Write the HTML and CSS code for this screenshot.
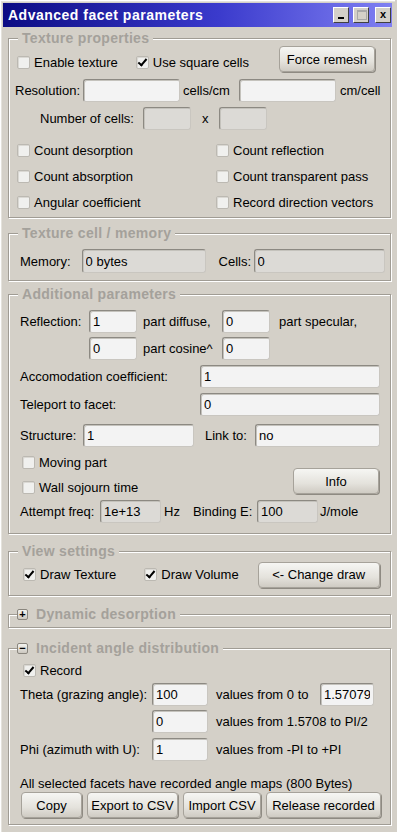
FILE: index.html
```html
<!DOCTYPE html>
<html lang="en">
<head>
    <meta charset="UTF-8">
    <title>Advanced facet parameters</title>
    <link rel="stylesheet" href="styles.css">
</head>
<body>
<div class="window">

    <div class="titlebar">
        <span class="title">Advanced facet parameters</span>
        <div class="title-btns">
            <span class="tbtn tb-min"></span>
            <span class="tbtn tb-max"></span>
            <span class="tbtn tb-close">x</span>
        </div>
    </div>

    <!-- Texture properties -->
    <fieldset class="group g-texture">
        <legend>Texture properties</legend>
        <div class="row r-top">
            <label class="check c-enable"><span class="cb"></span>Enable texture</label>
            <label class="check c-square"><span class="cb on"></span>Use square cells</label>
            <button class="btn b-remesh">Force remesh</button>
        </div>
        <div class="row r-res">
            <span class="lbl l-res">Resolution:</span>
            <input class="field f-res" value="">
            <span class="lbl l-cpc">cells/cm</span>
            <input class="field f-res2" value="">
            <span class="lbl">cm/cell</span>
        </div>
        <div class="row r-cells">
            <span class="lbl l-ncells">Number of cells:</span>
            <input class="field off f-cells" value="">
            <span class="lbl l-x">x</span>
            <input class="field off f-cells" value="">
        </div>
        <div class="row r-count first">
            <label class="check c-left"><span class="cb"></span>Count desorption</label>
            <label class="check c-right"><span class="cb"></span>Count reflection</label>
        </div>
        <div class="row r-count">
            <label class="check c-left"><span class="cb"></span>Count absorption</label>
            <label class="check c-right"><span class="cb"></span>Count transparent pass</label>
        </div>
        <div class="row r-count">
            <label class="check c-left"><span class="cb"></span>Angular coefficient</label>
            <label class="check c-right"><span class="cb"></span>Record direction vectors</label>
        </div>
    </fieldset>

    <!-- Texture cell / memory -->
    <fieldset class="group g-memory">
        <legend>Texture cell / memory</legend>
        <div class="row r-mem">
            <span class="lbl l-mem">Memory:</span>
            <input class="field off f-mem" value="0 bytes">
            <span class="lbl l-cellsc">Cells:</span>
            <input class="field off f-cellsc" value="0">
        </div>
    </fieldset>

    <!-- Additional parameters -->
    <fieldset class="group g-add">
        <legend>Additional parameters</legend>
        <div class="row r-refl">
            <span class="lbl l-refl">Reflection:</span>
            <input class="field f-small" value="1">
            <span class="lbl l-part">part diffuse,</span>
            <input class="field f-small" value="0">
            <span class="lbl l-spec">part specular,</span>
        </div>
        <div class="row r-refl2">
            <input class="field f-small f-indent" value="0">
            <span class="lbl l-part">part cosine^</span>
            <input class="field f-small" value="0">
        </div>
        <div class="row r-wide">
            <span class="lbl l-long">Accomodation coefficient:</span>
            <input class="field f-long" value="1">
        </div>
        <div class="row r-wide">
            <span class="lbl l-long">Teleport to facet:</span>
            <input class="field f-long" value="0">
        </div>
        <div class="row r-struct">
            <span class="lbl l-struct">Structure:</span>
            <input class="field f-struct" value="1">
            <span class="lbl l-link">Link to:</span>
            <input class="field f-link" value="no">
        </div>
        <div class="row r-moving">
            <div class="col">
                <label class="check c-move"><span class="cb"></span>Moving part</label>
                <label class="check c-move"><span class="cb"></span>Wall sojourn time</label>
            </div>
            <button class="btn b-info">Info</button>
        </div>
        <div class="row r-freq">
            <span class="lbl l-freq">Attempt freq:</span>
            <input class="field off f-freq" value="1e+13">
            <span class="lbl l-hz">Hz</span>
            <span class="lbl l-bind">Binding E:</span>
            <input class="field off f-freq" value="100">
            <span class="lbl l-jm">J/mole</span>
        </div>
    </fieldset>

    <!-- View settings -->
    <fieldset class="group g-view">
        <legend>View settings</legend>
        <div class="row r-view">
            <label class="check c-tex"><span class="cb on"></span>Draw Texture</label>
            <label class="check c-vol"><span class="cb on"></span>Draw Volume</label>
            <button class="btn b-draw">&lt;- Change draw</button>
        </div>
    </fieldset>

    <!-- Dynamic desorption (collapsed) -->
    <fieldset class="group g-dyn">
        <legend class="toggle"><span class="tg">+</span>Dynamic desorption</legend>
    </fieldset>

    <!-- Incident angle distribution -->
    <fieldset class="group g-angle">
        <legend class="toggle"><span class="tg">−</span>Incident angle distribution</legend>
        <div class="row r-record">
            <label class="check c-tex"><span class="cb on"></span>Record</label>
        </div>
        <div class="row r-theta">
            <span class="lbl l-theta">Theta (grazing angle):</span>
            <input class="field f-angle" value="100">
            <span class="lbl l-vals">values from 0 to</span>
            <input class="field f-limit" value="1.570796">
        </div>
        <div class="row r-theta2">
            <input class="field f-angle f-angle-indent" value="0">
            <span class="lbl l-vals">values from 1.5708 to PI/2</span>
        </div>
        <div class="row r-phi">
            <span class="lbl l-theta">Phi (azimuth with U):</span>
            <input class="field f-angle" value="1">
            <span class="lbl l-vals">values from -PI to +PI</span>
        </div>
        <div class="row r-info">
            <span class="lbl">All selected facets have recorded angle maps (800 Bytes)</span>
        </div>
        <div class="row r-btns">
            <button class="btn b-copy">Copy</button>
            <button class="btn b-export">Export to CSV</button>
            <button class="btn b-import">Import CSV</button>
            <button class="btn b-release">Release recorded</button>
        </div>
    </fieldset>

</div>
</body>
</html>
```

FILE: styles.css
```css
body {
    margin: 0;
    padding: 0;
    background-color: #d4d0c8;
    font-family: 'Liberation Sans', Arial, sans-serif;
    font-size: 13px;
    color: #000;
}
.window {
    width: 395px;
    height: 832px;
    box-sizing: border-box;
    padding: 3px 3px 0 0;
    background-color: #d4d0c8;
    box-shadow: inset 1px 1px 0 #fff, inset 2px 2px 0 #e4e2dc;
}

/* title bar */
.titlebar {
    height: 24px;
    margin-left: 3px;
    display: flex;
    align-items: center;
    justify-content: space-between;
    background: linear-gradient(to right, #0c0c84, #3a3acc 55%, #8080f2);
}
.title {
    color: #fff;
    font-weight: bold;
    font-size: 14px;
    padding-left: 5px;
    letter-spacing: 0.5px;
}
.title-btns {
    display: flex;
    gap: 4px;
    padding-right: 1px;
}
.tbtn {
    width: 16px;
    height: 16px;
    box-sizing: border-box;
    background-color: #d4d0c8;
    border: 1px solid;
    border-color: #fff #404040 #404040 #fff;
    font-size: 11px;
    line-height: 13px;
    text-align: center;
    position: relative;
}
.tb-min::after {
    content: "";
    position: absolute;
    left: 4px;
    bottom: 3px;
    width: 6px;
    height: 2px;
    background: #000;
}
.tb-max::after {
    content: "";
    position: absolute;
    left: 3px;
    top: 2px;
    width: 8px;
    height: 7px;
    border: 1px solid #a8a8a8;
    border-top-width: 2px;
}
.tb-close {
    margin-left: 2px;
    font-weight: bold;
}

/* group boxes */
.group {
    margin: 0 0 0 8px;
    padding: 0;
    width: 383px;
    box-sizing: border-box;
    border: 1px solid #a09c94;
    box-shadow: inset 1px 1px 0 #fff, 1px 1px 0 #fff;
    min-width: 0;
}
.group legend {
    margin-left: 9px;
    padding: 0 4px;
    height: 16px;
    line-height: 16px;
    font-size: 14px;
    letter-spacing: 0.3px;
    font-weight: bold;
    color: #a4a19b;
    background-color: #d4d0c8;
}
.group legend.toggle {
    margin-left: 8px;
    padding-left: 0;
    display: flex;
    align-items: center;
}
.tg {
    width: 11px;
    height: 11px;
    box-sizing: border-box;
    margin-right: 8px;
    border: 1px solid #8a867e;
    border-radius: 2px;
    background: linear-gradient(#f4f4f0, #ccc8c0);
    color: #000;
    font-size: 11px;
    line-height: 8px;
    letter-spacing: 0;
    text-align: center;
}
.g-texture { margin-top: 3px; padding-bottom: 2px; }
.g-memory { margin-top: 7px; padding-bottom: 7px; }
.g-add { margin-top: 5px; padding-bottom: 10px; }
.g-view { margin-top: 9px; padding-bottom: 8px; }
.g-dyn { margin-top: 10px; padding-bottom: 5px; }
.g-angle { margin-top: 12px; padding-bottom: 6px; }

/* rows */
.row {
    display: flex;
    align-items: center;
}
.lbl {
    white-space: nowrap;
}
.check {
    display: flex;
    align-items: center;
    height: 16px;
    white-space: nowrap;
}
.cb {
    width: 13px;
    height: 13px;
    box-sizing: border-box;
    margin-right: 4px;
    border: 1px solid #bcb9b2;
    border-radius: 2px;
    background: #f0f0ee;
    box-shadow: inset 1px 1px 0 #dad8d3;
    position: relative;
}
.cb.on::after {
    content: "";
    position: absolute;
    left: 3px;
    top: 0px;
    width: 3px;
    height: 7px;
    border: solid #000;
    border-width: 0 2px 2px 0;
    transform: rotate(40deg);
}
.field {
    height: 23px;
    box-sizing: border-box;
    padding: 0 3px;
    font-family: 'Liberation Sans', Arial, sans-serif;
    font-size: 13px;
    color: #000;
    border: 1px solid;
    border-color: #8c8982 #c9c6c0 #c9c6c0 #8c8982;
    border-radius: 3px;
    background-color: #f3f3f3;
    box-shadow: inset 1px 1px 0 #c4c2bc;
    outline: none;
}
.field.off {
    background-color: #dcdad6;
}
.btn {
    height: 26px;
    box-sizing: border-box;
    padding: 0;
    font-family: 'Liberation Sans', Arial, sans-serif;
    font-size: 13px;
    color: #000;
    border: 1px solid #a6a29a;
    border-radius: 4px;
    background: linear-gradient(#f6f6f3, #e4e2dc 60%, #cfcbc3);
    box-shadow: 1px 1px 0 #8e8a82;
}

/* texture properties */
.r-top { height: 26px; align-items: flex-end; }
.c-enable { margin-left: 8px; margin-bottom: 2px; }
.c-square { margin-left: 18px; margin-bottom: 2px; }
.b-remesh { margin-left: 30px; width: 96px; align-self: flex-start; }
.r-res { margin-top: 7px; height: 23px; padding-left: 6px; }
.l-res { width: 68px; }
.f-res { width: 97px; }
.l-cpc { margin-left: 3px; width: 56px; }
.f-res2 { width: 97px; margin-right: 4px; }
.r-cells { margin-top: 5px; height: 23px; padding-left: 31px; }
.l-ncells { width: 103px; }
.f-cells { width: 48px; }
.l-x { margin: 0 10px 0 11px; }
.r-count { height: 26px; }
.r-count.first { margin-top: 7px; }
.c-left { margin-left: 8px; width: 199px; }

/* memory */
.r-mem { margin-top: 8px; height: 24px; padding-left: 11px; }
.f-mem { width: 124px; height: 24px; margin-left: 11px; }
.l-cellsc { margin-left: 13px; width: 35px; }
.f-cellsc { width: 131px; height: 24px; }

/* additional parameters */
.r-refl { margin-top: 8px; height: 23px; padding-left: 11px; }
.l-refl { width: 69px; }
.f-small { width: 48px; }
.l-part { margin-left: 6px; width: 79px; }
.l-spec { margin-left: 9px; }
.r-refl2 { margin-top: 4px; height: 23px; }
.f-indent { margin-left: 80px; }
.r-wide { margin-top: 5px; height: 23px; padding-left: 11px; }
.l-long { width: 180px; }
.f-long { width: 180px; }
.r-struct { margin-top: 8px; height: 23px; padding-left: 11px; }
.l-struct { width: 63px; }
.f-struct { width: 111px; }
.l-link { margin-left: 11px; width: 50px; }
.f-link { width: 125px; }
.r-moving { margin-top: 3px; height: 50px; align-items: flex-start; }
.col { display: flex; flex-direction: column; width: 284px; }
.c-move { height: 25px; margin-left: 13px; }
.b-info { width: 86px; margin-top: 18px; }
.r-freq { height: 23px; padding-left: 11px; }
.l-freq { width: 80px; }
.f-freq { width: 61px; }
.l-hz { margin-left: 3px; width: 29px; }
.l-bind { width: 64px; }
.l-jm { margin-left: 2px; }

/* view settings */
.r-view { margin-top: 3px; height: 25px; }
.c-tex { margin-left: 14px; }
.c-vol { margin-left: 28px; }
.b-draw { margin-left: 19px; width: 122px; }

/* incident angle */
.r-record { margin-top: 2px; height: 25px; }
.r-theta { height: 23px; padding-left: 11px; }
.l-theta { width: 132px; }
.f-angle { width: 56px; }
.f-angle-indent { margin-left: 143px; }
.l-vals { margin-left: 8px; width: 104px; }
.f-limit { width: 54px; }
.r-theta2 { margin-top: 4px; height: 23px; }
.r-phi { margin-top: 5px; height: 23px; padding-left: 11px; }
.r-info { margin-top: 14px; height: 16px; padding-left: 11px; }
.r-btns { margin-top: 1px; height: 26px; padding-left: 12px; gap: 5px; }
.b-copy { width: 61px; }
.b-export { width: 91px; }
.b-import { width: 78px; }
.b-release { width: 115px; }
```
